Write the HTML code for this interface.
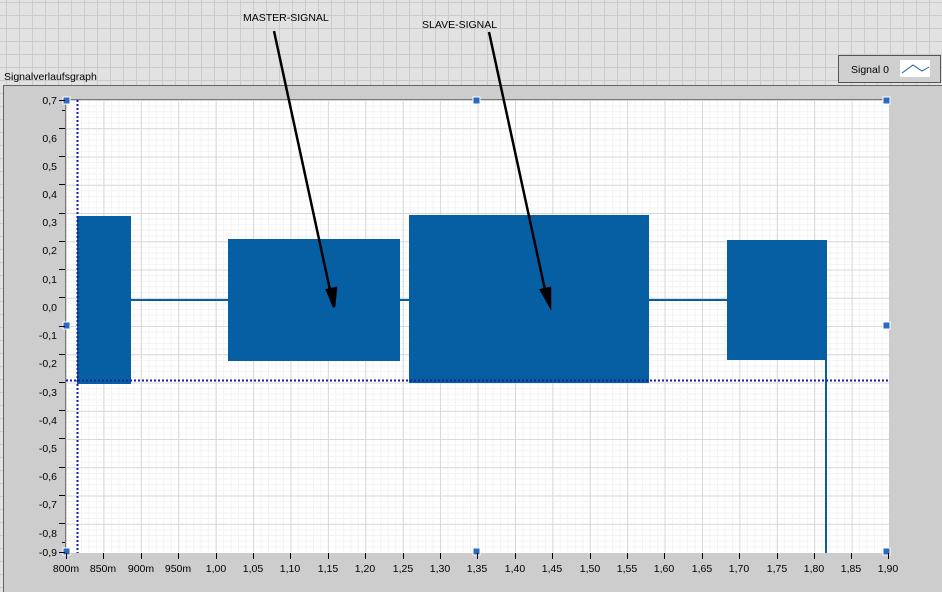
<!DOCTYPE html><html><head><style>
body{margin:0;width:942px;height:592px;overflow:hidden;font-family:"Liberation Sans",sans-serif;}
</style></head><body>
<svg width="942" height="592" xmlns="http://www.w3.org/2000/svg" font-family="Liberation Sans, sans-serif" font-size="10.5">
<defs>
<pattern id="bg" width="13" height="13" patternUnits="userSpaceOnUse" x="6" y="2"><rect width="13" height="13" fill="#e2e2e2"/><path d="M0 0.5H13M0.5 0V13" stroke="#cbcbcb" stroke-width="1"/></pattern>
<pattern id="minx" width="7.482" height="452" patternUnits="userSpaceOnUse" x="66" y="100"><path d="M0.5 0V452" stroke="#f3f3f3"/></pattern>
<pattern id="miny" width="823" height="5.65" patternUnits="userSpaceOnUse" x="66" y="100"><path d="M0 0.5H823" stroke="#f3f3f3"/></pattern>
<pattern id="majx" width="37.41" height="452" patternUnits="userSpaceOnUse" x="66" y="100"><path d="M0.5 0V452" stroke="#d8d8d8"/></pattern>
<pattern id="majy" width="823" height="28.25" patternUnits="userSpaceOnUse" x="66" y="100"><path d="M0 0.5H823" stroke="#d8d8d8"/></pattern>
</defs>
<rect width="942" height="592" fill="url(#bg)"/>
<text x="243" y="21">MASTER-SIGNAL</text>
<text x="422" y="28">SLAVE-SIGNAL</text>
<text x="4" y="80">Signalverlaufsgraph</text>
<rect x="838.5" y="55.5" width="102" height="27" fill="#d0d0d0" stroke="#555"/>
<text x="851" y="73">Signal 0</text>
<rect x="900" y="60" width="30" height="17" fill="#fff"/>
<path d="M902 73L913 65L922 71L929 67" stroke="#1a5fa0" fill="none"/>
<rect x="3.5" y="85.5" width="940" height="510" fill="#cdcdcd" stroke="#666"/>
<rect x="66" y="99" width="823" height="454" fill="#fff"/>
<rect x="66" y="100" width="823" height="452" fill="url(#minx)"/>
<rect x="66" y="100" width="823" height="452" fill="url(#miny)"/>
<rect x="66" y="100" width="823" height="452" fill="url(#majx)"/>
<rect x="66" y="100" width="823" height="452" fill="url(#majy)"/>
<path d="M65.5 99V553M66 99.5H889" stroke="#777"/>
<g fill="#065fa3">
<rect x="77" y="216" width="54" height="168"/>
<rect x="228" y="239" width="172" height="122"/>
<rect x="409" y="215" width="240" height="168"/>
<rect x="727" y="240" width="100" height="120"/>
<rect x="131" y="299" width="97" height="2"/>
<rect x="400" y="299" width="9" height="2"/>
<rect x="649" y="299" width="78" height="2"/>
<rect x="825" y="360" width="2" height="193"/>
</g>
<path d="M77.5 100V553M66 380.5H889" stroke="#1a1aa0" stroke-width="2" stroke-dasharray="2,2"/>
<g stroke="#000" stroke-width="2.5" fill="#000">
<path d="M274 31L330 290"/><path d="M334 307L327 290L336 288Z"/>
<path d="M489 32L545 290"/><path d="M550 306L541 290L550 288Z"/>
</g>
<g fill="#2a6ac0" stroke="#fff" stroke-width="1">
<rect x="63" y="97" width="7" height="7"/><rect x="473" y="97" width="7" height="7"/><rect x="883" y="97" width="7" height="7"/>
<rect x="63" y="322" width="7" height="7"/><rect x="883" y="322" width="7" height="7"/>
<rect x="63" y="548" width="7" height="7"/><rect x="473" y="548" width="7" height="7"/><rect x="883" y="548" width="7" height="7"/>
</g>
<g text-anchor="end" fill="#000">
<text x="57" y="104">0,7</text><text x="57" y="142">0,6</text><text x="57" y="170">0,5</text><text x="57" y="198">0,4</text><text x="57" y="226">0,3</text><text x="57" y="254">0,2</text><text x="57" y="283">0,1</text><text x="57" y="311">0,0</text><text x="57" y="339">-0,1</text><text x="57" y="367">-0,2</text><text x="57" y="396">-0,3</text><text x="57" y="424">-0,4</text><text x="57" y="452">-0,5</text><text x="57" y="480">-0,6</text><text x="57" y="508">-0,7</text><text x="57" y="537">-0,8</text><text x="57" y="556">-0,9</text>
</g>
<g stroke="#000">
<path d="M59 100.5H65M59 128.5H65M59 156.5H65M59 184.5H65M59 213.5H65M59 241.5H65M59 269.5H65M59 297.5H65M59 326.5H65M59 354.5H65M59 382.5H65M59 410.5H65M59 438.5H65M59 467.5H65M59 495.5H65M59 523.5H65M59 552.5H65"/>
<path d="M62 110.5H65M62 542.5H65"/>
<path d="M66.5 553V559M103.5 553V559M141.5 553V559M178.5 553V559M216.5 553V559M253.5 553V559M290.5 553V559M328.5 553V559M365.5 553V559M403.5 553V559M440.5 553V559M477.5 553V559M515.5 553V559M552.5 553V559M590.5 553V559M627.5 553V559M664.5 553V559M702.5 553V559M739.5 553V559M777.5 553V559M814.5 553V559M851.5 553V559M888.5 553V559"/>
</g>
<g text-anchor="middle" fill="#000">
<text x="66" y="572">800m</text><text x="103" y="572">850m</text><text x="141" y="572">900m</text><text x="178" y="572">950m</text><text x="216" y="572">1,00</text><text x="253" y="572">1,05</text><text x="290" y="572">1,10</text><text x="328" y="572">1,15</text><text x="365" y="572">1,20</text><text x="403" y="572">1,25</text><text x="440" y="572">1,30</text><text x="477" y="572">1,35</text><text x="515" y="572">1,40</text><text x="552" y="572">1,45</text><text x="590" y="572">1,50</text><text x="627" y="572">1,55</text><text x="664" y="572">1,60</text><text x="702" y="572">1,65</text><text x="739" y="572">1,70</text><text x="777" y="572">1,75</text><text x="814" y="572">1,80</text><text x="851" y="572">1,85</text><text x="888" y="572">1,90</text>
</g>
</svg>
</body></html>
